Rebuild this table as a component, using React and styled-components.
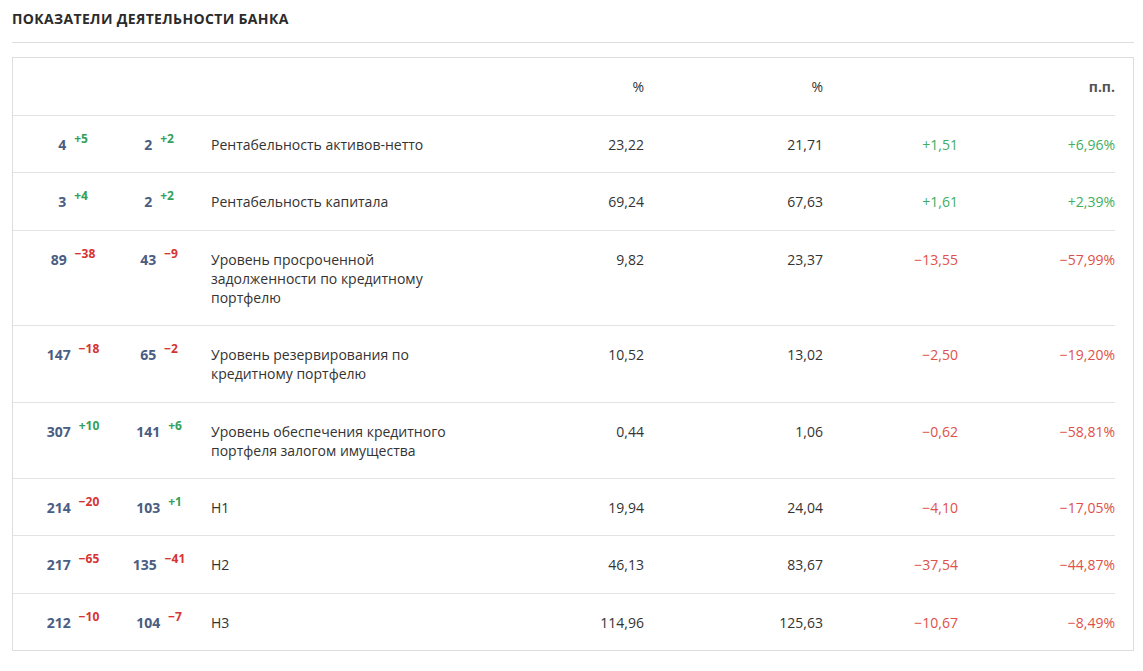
import React from "react";
import styled, { createGlobalStyle } from "styled-components";

const GlobalStyle = createGlobalStyle`
  body {
    margin: 0;
    background: #fff;
    font-family: "Open Sans", "Noto Sans", Arial, sans-serif;
  }
`;

const rows = [
  { r1: 4, d1: "+5", r2: 2, d2: "+2", name: "Рентабельность активов-нетто", v1: "23,22", v2: "21,71", diff: "+1,51", pct: "+6,96%" },
  { r1: 3, d1: "+4", r2: 2, d2: "+2", name: "Рентабельность капитала", v1: "69,24", v2: "67,63", diff: "+1,61", pct: "+2,39%" },
  { r1: 89, d1: "−38", r2: 43, d2: "−9", name: "Уровень просроченной задолженности по кредитному портфелю", v1: "9,82", v2: "23,37", diff: "−13,55", pct: "−57,99%" },
  { r1: 147, d1: "−18", r2: 65, d2: "−2", name: "Уровень резервирования по кредитному портфелю", v1: "10,52", v2: "13,02", diff: "−2,50", pct: "−19,20%" },
  { r1: 307, d1: "+10", r2: 141, d2: "+6", name: "Уровень обеспечения кредитного портфеля залогом имущества", v1: "0,44", v2: "1,06", diff: "−0,62", pct: "−58,81%" },
  { r1: 214, d1: "−20", r2: 103, d2: "+1", name: "Н1", v1: "19,94", v2: "24,04", diff: "−4,10", pct: "−17,05%" },
  { r1: 217, d1: "−65", r2: 135, d2: "−41", name: "Н2", v1: "46,13", v2: "83,67", diff: "−37,54", pct: "−44,87%" },
  { r1: 212, d1: "−10", r2: 104, d2: "−7", name: "Н3", v1: "114,96", v2: "125,63", diff: "−10,67", pct: "−8,49%" },
];

const App = () => {
  return (
    <>
      <GlobalStyle />
      <Page>
        <Title>Показатели деятельности банка</Title>
        <Table>
          <HeadRow>
            <Cell />
            <Cell />
            <Cell />
            <NumCell>%</NumCell>
            <NumCell>%</NumCell>
            <NumCell />
            <NumCell bold>п.п.</NumCell>
          </HeadRow>
          {rows.map((row, i) => (
            <Row key={i}>
              <RankCell>
                <Rank>{row.r1}</Rank>
                <Delta up={row.d1.startsWith("+")}>{row.d1}</Delta>
              </RankCell>
              <RankCell>
                <Rank>{row.r2}</Rank>
                <Delta up={row.d2.startsWith("+")}>{row.d2}</Delta>
              </RankCell>
              <NameCell>
                <Name>{row.name}</Name>
              </NameCell>
              <NumCell>{row.v1}</NumCell>
              <NumCell>{row.v2}</NumCell>
              <NumCell tone={row.diff.startsWith("+") ? "up" : "down"}>{row.diff}</NumCell>
              <NumCell tone={row.pct.startsWith("+") ? "up" : "down"}>{row.pct}</NumCell>
            </Row>
          ))}
        </Table>
      </Page>
    </>
  );
};

let Page = styled.div`
  padding: 0 9px 0 12px;
  width: 1122px;
`;

let Title = styled.h2`
  margin: 0;
  padding: 10px 0 14px;
  border-bottom: 1px solid #dedede;
  font-size: 14px;
  line-height: 18px;
  font-weight: 700;
  letter-spacing: 0.35px;
  text-transform: uppercase;
  color: #2b2b2b;
`;

let Table = styled.div`
  margin-top: 14px;
  border: 1px solid #dedede;
  padding-right: 18px;
`;

let Row = styled.div`
  display: grid;
  grid-template-columns: 120px 52px 1fr 180px 179px 135px 157px;
  border-top: 1px solid #e3e3e3;
  font-size: 14px;
  line-height: 19px;
  color: #333;
`;

let HeadRow = styled(Row)`
  border-top: none;
  height: 57px;
  align-items: center;
`;

let Cell = styled.div`
  padding: 19px 0 18.4px;
`;

let RankCell = styled(Cell)`
  display: flex;
  justify-content: center;
  align-items: flex-start;
  gap: 8px;
  white-space: nowrap;
`;

let Rank = styled.span`
  font-weight: 700;
  color: #4a5d82;
`;

let Delta = styled.span`
  font-size: 12px;
  font-weight: 700;
  line-height: 12px;
  margin-top: -2px;
  color: ${(p) => (p.up ? "#33a05a" : "#d63333")};
`;

let NameCell = styled(Cell)`
  padding-left: 26px;
`;

let Name = styled.div`
  max-width: 236px;
`;

let NumCell = styled(Cell)`
  text-align: right;
  font-weight: ${(p) => (p.bold ? 700 : 400)};
  color: ${(p) => (p.tone === "up" ? "#3fae60" : p.tone === "down" ? "#e0504a" : p.bold ? "#555" : "#333")};
`;

export default App;
